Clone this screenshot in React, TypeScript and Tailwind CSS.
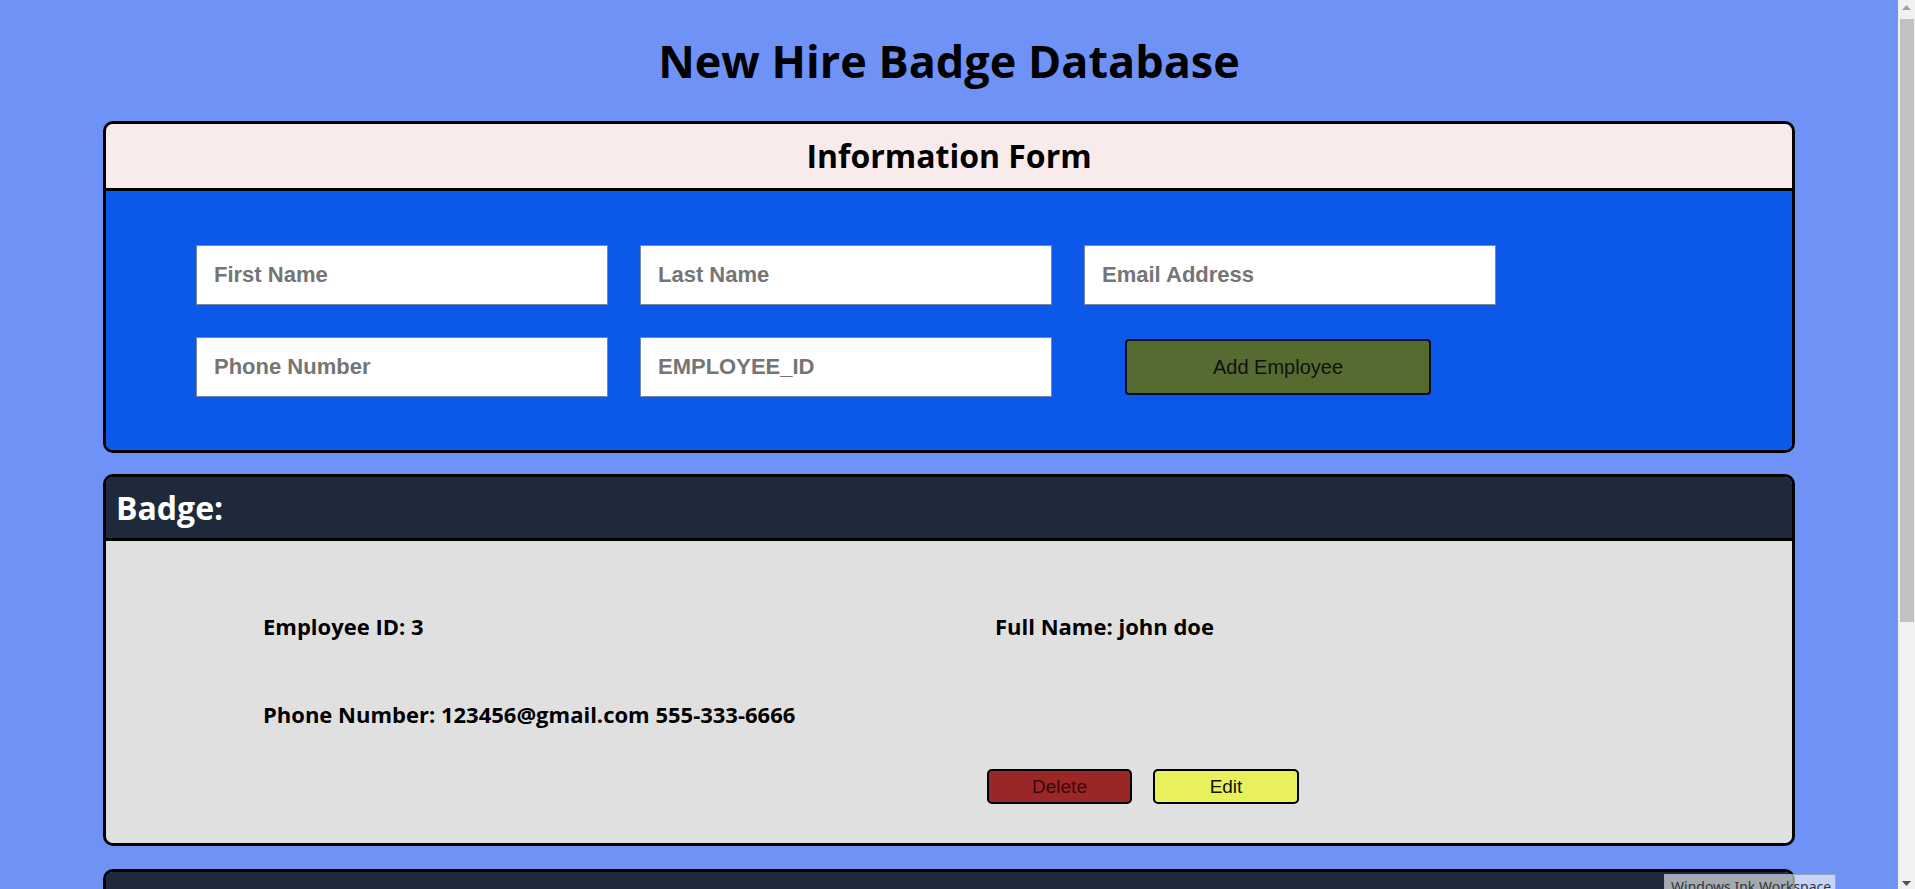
import type { ReactNode } from 'react';

const comic = "font-['Comic_Sans_MS','Open_Sans',sans-serif]";
const arial = "font-['Liberation_Sans',Arial,sans-serif]";

const fields = [
  ['First Name', 'Last Name', 'Email Address'],
  ['Phone Number', 'EMPLOYEE_ID'],
];

function Card({ header, children }: { header: ReactNode; children?: ReactNode }) {
  return (
    <section className="mx-[103px] overflow-hidden rounded-[10px] border-[3px] border-black">
      {header}
      {children}
    </section>
  );
}

function BadgeHeader({ title }: { title?: string }) {
  return (
    <div className="flex h-[64px] items-center border-b-[3px] border-black bg-[#1e293b] pl-[10px]">
      {title && <h2 className={`${comic} text-[32px] font-bold leading-none text-white`}>{title}</h2>}
    </div>
  );
}

function BadgeBody() {
  return (
    <div className={`${comic} bg-[#e0e0e0] pb-[39px] pl-[157px] pt-[70px] text-[22px] font-bold leading-[30px] text-black`}>
      <div className="grid grid-cols-[724px_auto]">
        <span>Employee ID: 3</span>
        <span className="pl-[8px]">Full Name: john doe</span>
      </div>
      <div className="mt-[58px]">Phone Number: 123456@gmail.com 555-333-6666</div>
      <div className="mt-[40px] grid grid-cols-[724px_auto]">
        <span />
        <div className="flex gap-[21px]">
          <button className={`${arial} h-[35px] w-[145px] rounded-[5px] border-2 border-black bg-[#9b2628] text-[19px] font-normal text-[#3a0808]`}>
            Delete
          </button>
          <button className={`${arial} h-[35px] w-[146px] rounded-[5px] border-2 border-black bg-[#e8f15b] text-[19px] font-normal text-[#111]`}>
            Edit
          </button>
        </div>
      </div>
    </div>
  );
}

export default function App() {
  return (
    <div className="relative flex h-[889px] overflow-hidden bg-[#6f92f6]">
      <main className="flex-1 overflow-hidden">
        <h1 className={`${comic} mt-[33px] text-center text-[45px] font-bold leading-[56px] text-black`}>
          New Hire Badge Database
        </h1>

        <div className="mt-[32px] flex flex-col">
          <Card
            header={
              <div className="flex h-[67px] items-center justify-center border-b-[3px] border-black bg-[#f9ebeb]">
                <h2 className={`${comic} text-[32px] font-bold leading-none text-black`}>Information Form</h2>
              </div>
            }
          >
            <form className="flex flex-col gap-[32px] bg-[#0b58eb] pb-[53px] pl-[90px] pt-[54px]">
              {fields.map((row, i) => (
                <div key={i} className="flex gap-[32px]">
                  {row.map((f) => (
                    <input
                      key={f}
                      placeholder={f}
                      className={`${arial} h-[60px] w-[412px] border border-[#7586a3] bg-white px-[17px] text-[22px] font-bold text-black placeholder:text-[#757575]`}
                    />
                  ))}
                  {i === 1 && (
                    <div className="flex w-[412px] items-center pl-[41px]">
                      <button
                        type="button"
                        className={`${arial} h-[56px] w-[306px] rounded-[4px] border-2 border-[#0a0f24] bg-[#556b2f] text-[20px] text-[#111]`}
                      >
                        Add Employee
                      </button>
                    </div>
                  )}
                </div>
              ))}
            </form>
          </Card>

          <div className="mt-[21px]">
            <Card header={<BadgeHeader title="Badge:" />}>
              <BadgeBody />
            </Card>
          </div>

          {/* next badge, only its top edge shows in the viewport */}
          <div className="mt-[23px]">
            <Card header={<BadgeHeader />}>
              <div className="h-[300px] bg-[#e0e0e0]" />
            </Card>
          </div>
        </div>
      </main>

      <aside className="relative w-[17px] shrink-0 bg-[#f1f1f1]">
        <svg className="absolute left-[4px] top-[5px]" width="9" height="6" viewBox="0 0 9 6">
          <path d="M4.5 0 L9 5 L0 5 Z" fill="#a3a3a3" />
        </svg>
        <div className="absolute left-[2px] top-[19px] h-[603px] w-[14px] bg-[#c1c1c1]" />
        <svg className="absolute bottom-[3px] left-[4px]" width="9" height="6" viewBox="0 0 9 6">
          <path d="M0 1 L9 1 L4.5 6 Z" fill="#505050" />
        </svg>
      </aside>

      <div className="absolute left-[1664px] top-[874px] h-[30px] w-[172px] border border-[#9aa4b8] bg-white/60 pl-[6px] pt-[3px] font-['Noto_Sans',sans-serif] text-[14px] leading-[18px] text-[#333]">
        Windows Ink Workspace
      </div>
    </div>
  );
}
